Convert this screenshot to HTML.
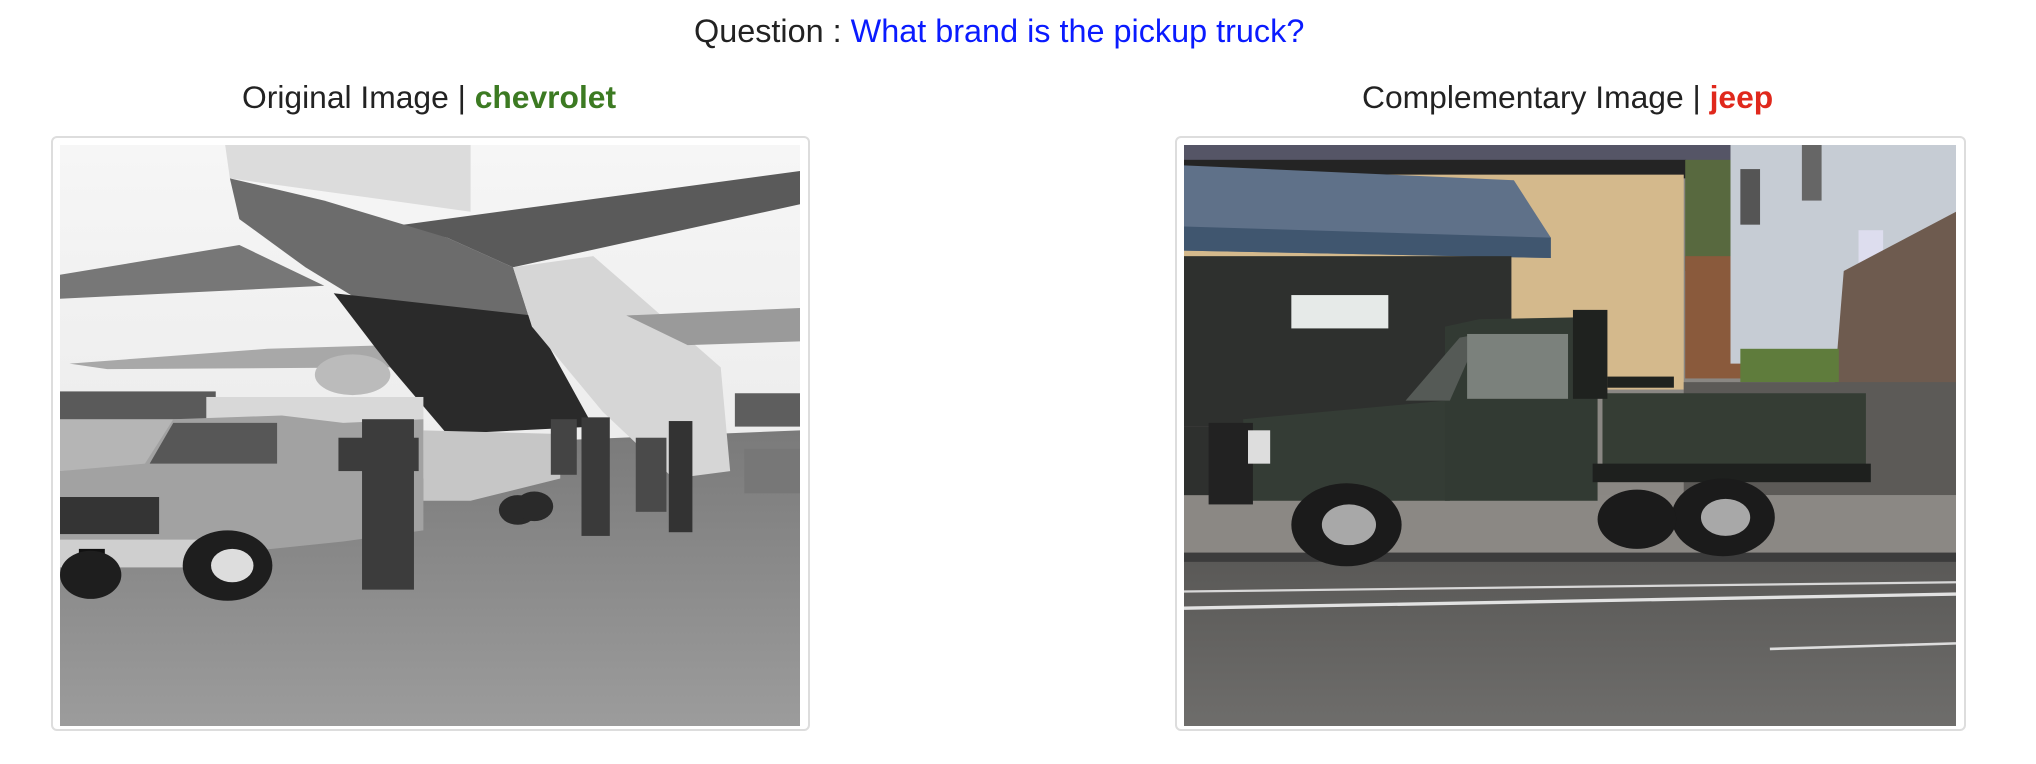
<!DOCTYPE html>
<html><head><meta charset="utf-8"><style>
html,body{margin:0;padding:0;background:#fff;width:2036px;height:764px;overflow:hidden}
body{position:relative;font-family:"Liberation Sans",Arial,sans-serif;color:#222}
.t{position:absolute;white-space:nowrap;font-size:32.4px;line-height:1}
.box{position:absolute;top:136px;height:595px;border:2px solid #ddd;border-radius:6px;box-sizing:border-box}
svg{position:absolute;top:145px;height:581px}
</style></head><body>
<div class="t" style="left:694px;top:15px">Question : <span style="color:#0a1bff">What brand is the pickup truck?</span></div>
<div class="t" style="left:242px;top:82px;font-size:31.8px">Original Image | <b style="color:#3c7a22">chevrolet</b></div>
<div class="t" style="left:1362px;top:82px;font-size:31.8px">Complementary Image | <b style="color:#e0281c">jeep</b></div>
<div class="box" style="left:51px;width:759px"></div>
<div class="box" style="left:1175px;width:791px"></div>

<svg style="left:60px;width:740px" viewBox="0 0 1568 1568" preserveAspectRatio="none">
<defs><linearGradient id="g1" x1="0" y1="0" x2="0" y2="1"><stop offset="0" stop-color="#7a7a7a"/><stop offset="1" stop-color="#9c9c9c"/></linearGradient>
<linearGradient id="s1" x1="0" y1="0" x2="0" y2="1"><stop offset="0" stop-color="#f6f6f6"/><stop offset="1" stop-color="#e4e4e4"/></linearGradient></defs>
<rect width="1568" height="1568" fill="url(#s1)"/>
<rect x="0" y="665" width="330" height="80" fill="#5a5a5a"/>
<rect x="1430" y="670" width="138" height="90" fill="#5e5e5e"/>
<rect x="0" y="740" width="320" height="140" fill="#b5b5b5"/>
<polygon points="0,880 400,860 1000,800 1568,770 1568,1568 0,1568" fill="url(#g1)"/>
<polygon points="0,350 380,270 560,380 0,415" fill="#777"/>
<polygon points="20,590 440,550 700,540 700,600 100,605" fill="#a8a8a8"/>
<polygon points="350,0 870,0 870,180 360,90" fill="#dcdcdc"/>
<polygon points="700,220 1568,70 1568,160 960,330 820,250" fill="#5a5a5a"/>
<polygon points="360,90 560,150 820,250 960,330 1000,490 700,470 520,330 380,200" fill="#6c6c6c"/>
<polygon points="580,400 1000,460 1130,760 820,780 700,600" fill="#2a2a2a"/>
<polygon points="960,330 1130,300 1400,600 1420,880 1300,900 1150,720 1000,490" fill="#d6d6d6"/>
<polygon points="1200,460 1568,440 1568,530 1330,540" fill="#9a9a9a"/>
<ellipse cx="620" cy="620" rx="80" ry="55" fill="#bbb"/>
<rect x="310" y="680" width="460" height="220" fill="#d8d8d8"/>
<polygon points="0,880 180,860 240,740 470,730 600,750 770,740 770,1040 600,1070 300,1110 0,1130" fill="#a2a2a2"/>
<polygon points="190,860 240,750 460,750 460,860" fill="#575757"/>
<rect x="0" y="950" width="210" height="100" fill="#343434"/>
<rect x="0" y="1065" width="300" height="75" fill="#cfcfcf"/>
<rect x="40" y="1090" width="55" height="40" fill="#111"/>
<circle cx="355" cy="1135" r="95" fill="#1e1e1e"/><circle cx="365" cy="1135" r="45" fill="#ddd"/>
<circle cx="65" cy="1160" r="65" fill="#1e1e1e"/>
<polygon points="770,770 1060,780 1060,900 870,960 770,960" fill="#c6c6c6"/>
<circle cx="970" cy="985" r="40" fill="#2a2a2a"/><circle cx="1005" cy="975" r="40" fill="#2a2a2a"/>
<rect x="640" y="740" width="110" height="460" fill="#3c3c3c"/><rect x="590" y="790" width="170" height="90" fill="#3c3c3c"/>
<rect x="1105" y="735" width="60" height="320" fill="#3a3a3a"/>
<rect x="1290" y="745" width="50" height="300" fill="#333"/>
<rect x="1220" y="790" width="65" height="200" fill="#4a4a4a"/>
<rect x="1040" y="740" width="55" height="150" fill="#444"/>
<rect x="1450" y="820" width="118" height="120" fill="#777"/>
</svg>

<svg style="left:1184px;width:772px" viewBox="0 0 1568 1568" preserveAspectRatio="none">
<defs><linearGradient id="r1" x1="0" y1="0" x2="0" y2="1"><stop offset="0" stop-color="#5a5957"/><stop offset="1" stop-color="#6e6d6b"/></linearGradient></defs>
<rect width="1568" height="1568" fill="#8a8783"/>
<rect x="0" y="0" width="1110" height="45" fill="#556"/>
<rect x="0" y="40" width="1020" height="50" fill="#242424"/>
<rect x="0" y="80" width="1015" height="580" fill="#d4b98c"/>
<polygon points="0,55 670,95 745,250 745,305 0,285" fill="#5f7189"/>
<polygon points="0,220 745,250 745,305 0,285" fill="#40566f"/>
<rect x="0" y="300" width="665" height="460" fill="#2e302e"/>
<rect x="0" y="760" width="60" height="200" fill="#2e302e"/>
<rect x="218" y="405" width="197" height="90" fill="#e6eae8"/>
<rect x="1018" y="40" width="97" height="300" fill="#58693f"/>
<rect x="1018" y="300" width="127" height="330" fill="#8a5a3c"/>
<rect x="1110" y="0" width="458" height="590" fill="#c6ccd4"/>
<rect x="1130" y="65" width="40" height="150" fill="#555"/>
<rect x="1255" y="0" width="40" height="150" fill="#666"/>
<rect x="1370" y="230" width="50" height="160" fill="#dde"/>
<polygon points="1340,340 1568,180 1568,670 1320,670" fill="#6e5b4f"/>
<rect x="1130" y="550" width="200" height="90" fill="#5f7c3c"/>
<rect x="1015" y="640" width="553" height="305" fill="#5c5a57"/>
<rect x="0" y="945" width="1568" height="160" fill="#8b8884"/>
<rect x="0" y="1100" width="1568" height="30" fill="#3c3c3c"/>
<rect x="0" y="1125" width="1568" height="443" fill="url(#r1)"/>
<line x1="0" y1="1205" x2="1568" y2="1180" stroke="#d8d8d8" stroke-width="6"/>
<line x1="0" y1="1250" x2="1568" y2="1212" stroke="#e2e2e2" stroke-width="9"/>
<line x1="1190" y1="1360" x2="1568" y2="1345" stroke="#ddd" stroke-width="7"/>
<polygon points="120,740 530,690 540,960 130,960" fill="#343c35"/>
<polygon points="530,490 600,470 810,465 840,520 840,960 530,960" fill="#323a33"/>
<polygon points="450,690 560,520 600,510 540,690" fill="#555a56"/>
<rect x="575" y="510" width="205" height="175" fill="#7b817c"/>
<rect x="850" y="670" width="535" height="200" fill="#353d34"/>
<rect x="790" y="445" width="70" height="240" fill="#1f221f"/>
<rect x="860" y="625" width="135" height="30" fill="#1f221f"/>
<rect x="830" y="860" width="565" height="50" fill="#1e201e"/>
<rect x="50" y="750" width="90" height="220" fill="#222"/>
<rect x="130" y="770" width="45" height="90" fill="#ddd"/>
<circle cx="330" cy="1025" r="112" fill="#1b1b1b"/><circle cx="335" cy="1025" r="55" fill="#a8a8a8"/>
<circle cx="1095" cy="1005" r="105" fill="#1b1b1b"/><circle cx="1100" cy="1005" r="50" fill="#a8a8a8"/>
<circle cx="920" cy="1010" r="80" fill="#1b1b1b"/>
</svg>
</body></html>
